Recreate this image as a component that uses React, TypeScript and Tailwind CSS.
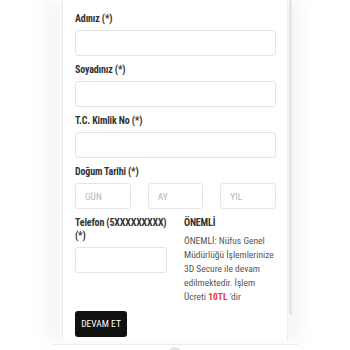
import React from "react";

function Label({ children }: { children: React.ReactNode }) {
  return (
    <div className="text-[10px] leading-[13px] font-bold text-[#333] mb-[5px] whitespace-nowrap tracking-[-0.15px]">
      {children}
    </div>
  );
}

function Field({ label }: { label: string }) {
  return (
    <div className="mb-[7px]">
      <Label>{label}</Label>
      <input className="block w-full h-[26px] rounded-[3px] border border-[#e4e4e4] bg-white outline-none" />
    </div>
  );
}

export default function App() {
  return (
    <div className="w-[350px] h-[350px] overflow-hidden bg-white relative font-['Roboto_Condensed','Open_Sans_Condensed',sans-serif]">
      <div className="absolute left-[44px] top-0 w-[258px] h-[342px] bg-[#f7f7f7] blur-[6px]" />
      <div className="relative ml-[62px] w-[226px] h-[341px] bg-white border-l border-r border-[#ececec] pl-[12px] pr-[11px] pt-[12px]">
        <Field label="Adınız (*)" />
        <Field label="Soyadınız (*)" />
        <Field label="T.C. Kimlik No (*)" />
        <div className="mb-[7px]">
          <Label>Doğum Tarihi (*)</Label>
          <div className="grid grid-cols-3 gap-[17px]">
            {["GÜN", "AY", "YIL"].map((p) => (
              <input
                key={p}
                placeholder={p}
                className="block w-full h-[26px] rounded-[3px] border border-[#e4e4e4] bg-white px-[9px] text-[9.5px] outline-none placeholder:text-[#b5b5b5] font-['Roboto_Condensed','Open_Sans_Condensed',sans-serif]"
              />
            ))}
          </div>
        </div>
        <div className="grid grid-cols-2 gap-[17px]">
          <div>
            <Label>
              Telefon (5XXXXXXXXX)
              <br />
              (*)
            </Label>
            <input className="block w-full h-[26px] rounded-[3px] border border-[#e4e4e4] bg-white outline-none" />
          </div>
          <div>
            <Label>ÖNEMLİ</Label>
            <p className="text-[9.5px] leading-[14px] text-[#555] whitespace-nowrap">
              ÖNEMLİ: Nüfus Genel
              <br />
              Müdürlüğü İşlemlerinize
              <br />
              3D Secure ile devam
              <br />
              edilmektedir. İşlem
              <br />
              Ücreti <span className="font-bold text-[#e53935]">10TL</span> 'dir
            </p>
          </div>
        </div>
        <button className="mt-[7px] w-[52px] h-[26px] rounded-[3px] bg-[#111] text-white text-[9.5px] font-normal leading-none font-['Roboto_Condensed','Open_Sans_Condensed',sans-serif]">
          DEVAM ET
        </button>
        <div className="absolute right-[-5px] top-0 w-[3px] h-[315px] rounded-full bg-[#e6e6e6]" />
      </div>
      <div className="relative ml-[52px] w-[246px] h-[10px] border-t border-[#ececec] bg-white mt-[3px]">
        <div className="absolute left-[116px] top-[2px] w-[14px] h-[14px] rounded-full bg-[#e2e2e2]" />
      </div>
    </div>
  );
}
